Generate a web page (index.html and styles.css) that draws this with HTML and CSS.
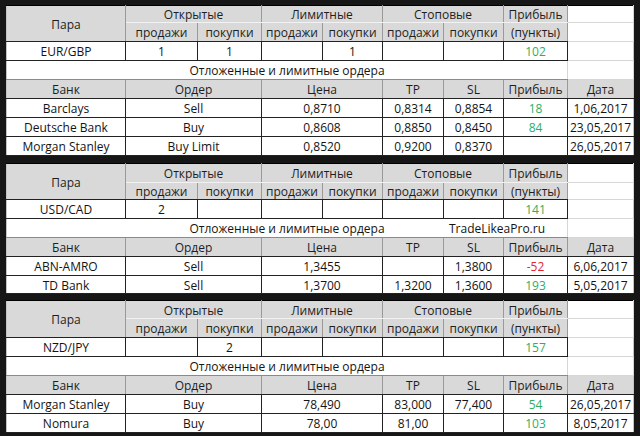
FILE: index.html
```html
<!DOCTYPE html>
<html lang="ru">
<head>
<meta charset="utf-8">
<title>Ордера</title>
<link rel="stylesheet" href="styles.css">
</head>
<body>
<div class="sheet">

<table class="sec sec1">
<colgroup><col class="c1"><col class="c2"><col class="c3"><col class="c4"><col class="c5"><col class="c6"><col class="c7"><col class="c8"><col class="c9"></colgroup>
<tr class="hd r17"><td rowspan="2" class="h">Пара</td><td colspan="2" class="h">Открытые</td><td colspan="2" class="h">Лимитные</td><td colspan="2" class="h">Стоповые</td><td class="h">Прибыль</td><td class="g"></td></tr>
<tr class="hd2"><td class="h">продажи</td><td class="h">покупки</td><td class="h">продажи</td><td class="h">покупки</td><td class="h">продажи</td><td class="h">покупки</td><td class="h">(пункты)</td><td class="g"></td></tr>
<tr class="d"><td>EUR/GBP</td><td>1</td><td>1</td><td></td><td>1</td><td></td><td></td><td class="pos">102</td><td class="g"></td></tr>
<tr class="ot"><td colspan="8" class="o">Отложенные и лимитные ордера</td><td class="g"></td></tr>
<tr class="bh"><td class="h">Банк</td><td colspan="2" class="h">Ордер</td><td colspan="2" class="h">Цена</td><td class="h">TP</td><td class="h">SL</td><td class="h">Прибыль</td><td class="h">Дата</td></tr>
<tr class="d"><td>Barclays</td><td colspan="2">Sell</td><td colspan="2">0,8710</td><td>0,8314</td><td>0,8854</td><td class="pos">18</td><td>1,06,2017</td></tr>
<tr class="d"><td>Deutsche Bank</td><td colspan="2">Buy</td><td colspan="2">0,8608</td><td>0,8850</td><td>0,8450</td><td class="pos">84</td><td>23,05,2017</td></tr>
<tr class="d"><td>Morgan Stanley</td><td colspan="2">Buy Limit</td><td colspan="2">0,8520</td><td>0,9200</td><td>0,8370</td><td></td><td>26,05,2017</td></tr>
</table>

<table class="sec sec2">
<colgroup><col class="c1"><col class="c2"><col class="c3"><col class="c4"><col class="c5"><col class="c6"><col class="c7"><col class="c8"><col class="c9"></colgroup>
<tr class="hd"><td rowspan="2" class="h">Пара</td><td colspan="2" class="h">Открытые</td><td colspan="2" class="h">Лимитные</td><td colspan="2" class="h">Стоповые</td><td class="h">Прибыль</td><td class="g"></td></tr>
<tr class="hd2 r17"><td class="h">продажи</td><td class="h">покупки</td><td class="h">продажи</td><td class="h">покупки</td><td class="h">продажи</td><td class="h">покупки</td><td class="h">(пункты)</td><td class="g"></td></tr>
<tr class="d"><td>USD/CAD</td><td>2</td><td></td><td></td><td></td><td></td><td></td><td class="pos">141</td><td class="g"></td></tr>
<tr class="ot"><td colspan="8" class="o">Отложенные и лимитные ордера<span class="wm">TradeLikeaPro.ru</span></td><td class="g"></td></tr>
<tr class="bh"><td class="h">Банк</td><td colspan="2" class="h">Ордер</td><td colspan="2" class="h">Цена</td><td class="h">TP</td><td class="h">SL</td><td class="h">Прибыль</td><td class="h">Дата</td></tr>
<tr class="d"><td>ABN-AMRO</td><td colspan="2">Sell</td><td colspan="2">1,3455</td><td></td><td>1,3800</td><td class="neg">-52</td><td>6,06,2017</td></tr>
<tr class="d r18"><td>TD Bank</td><td colspan="2">Sell</td><td colspan="2">1,3700</td><td>1,3200</td><td>1,3600</td><td class="pos">193</td><td>5,05,2017</td></tr>
</table>

<table class="sec sec3">
<colgroup><col class="c1"><col class="c2"><col class="c3"><col class="c4"><col class="c5"><col class="c6"><col class="c7"><col class="c8"><col class="c9"></colgroup>
<tr class="hd r18"><td rowspan="2" class="h">Пара</td><td colspan="2" class="h">Открытые</td><td colspan="2" class="h">Лимитные</td><td colspan="2" class="h">Стоповые</td><td class="h">Прибыль</td><td class="g"></td></tr>
<tr class="hd2"><td class="h">продажи</td><td class="h">покупки</td><td class="h">продажи</td><td class="h">покупки</td><td class="h">продажи</td><td class="h">покупки</td><td class="h">(пункты)</td><td class="g"></td></tr>
<tr class="d"><td>NZD/JPY</td><td></td><td>2</td><td></td><td></td><td></td><td></td><td class="pos">157</td><td class="g"></td></tr>
<tr class="ot"><td colspan="8" class="o">Отложенные и лимитные ордера</td><td class="g"></td></tr>
<tr class="bh"><td class="h">Банк</td><td colspan="2" class="h">Ордер</td><td colspan="2" class="h">Цена</td><td class="h">TP</td><td class="h">SL</td><td class="h">Прибыль</td><td class="h">Дата</td></tr>
<tr class="d"><td>Morgan Stanley</td><td colspan="2">Buy</td><td colspan="2">78,490</td><td>83,000</td><td>77,400</td><td class="pos">54</td><td>26,05,2017</td></tr>
<tr class="d"><td>Nomura</td><td colspan="2">Buy</td><td colspan="2">78,00</td><td>81,00</td><td></td><td class="pos">103</td><td>8,05,2017</td></tr>
</table>

</div>
</body>
</html>
```

FILE: styles.css
```css
html, body {
  margin: 0;
  padding: 0;
  background: #161616;
}

.sheet {
  width: 640px;
  height: 436px;
  box-sizing: border-box;
  padding: 5px 7px 0 6px;
  overflow: hidden;
}

.sec {
  width: 627px;
  table-layout: fixed;
  border-collapse: collapse;
  background: #fff;
  font-family: "Open Sans", "DejaVu Sans", sans-serif;
  font-size: 12px;
  color: #141414;
}

.sec1 { margin-bottom: 7px; }
.sec2 { margin-bottom: 6px; }

.c1 { width: 119px; }
.c2 { width: 72px; }
.c3 { width: 64px; }
.c4 { width: 61px; }
.c5 { width: 60px; }
.c6 { width: 61px; }
.c7 { width: 60px; }
.c8 { width: 64px; }
.c9 { width: 66px; }

.sec td {
  height: 17px;
  padding: 1px 0 0;
  text-align: center;
  vertical-align: middle;
  line-height: 15px;
  white-space: nowrap;
  border: 1px solid #222;
}

.sec .r17 td { height: 15px; }
.sec .r18 td { height: 16px; }

.sec td:first-child {
  border-left-color: #c4c4c4;
}

.sec td.h {
  background: #d9d9d9;
  border-left-color: #9a9a9a;
  border-right-color: #9a9a9a;
  color: #1e1e1e;
}

.sec .hd td.h {
  border-top-color: #000;
  border-bottom-color: #f2f2f2;
}

.sec .hd td.h[rowspan] {
  border-bottom-color: #222;
  border-left-color: #c4c4c4;
}

.sec .bh td.h:first-child {
  border-left-color: #c4c4c4;
}

.sec .bh td.h:last-child {
  border-right-color: #c4c4c4;
}

.sec td.g {
  background: #fff;
  border: 1px solid #d6d6d6;
}

.sec .hd td.g {
  border-top-color: #000;
}

.sec td.o {
  position: relative;
  border-left-color: #c4c4c4;
  border-right-color: #d6d6d6;
  border-bottom-color: #8a8a8a;
}

.sec .d td:last-child {
  border-right-color: #c4c4c4;
}

.pos { color: #2fae62; }
.neg { color: #e3262b; }

.wm {
  position: absolute;
  left: 442px;
  top: 2px;
  line-height: 15px;
  color: #141414;
}
```
